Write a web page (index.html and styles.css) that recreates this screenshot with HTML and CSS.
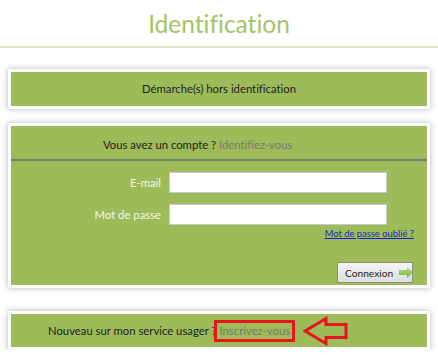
FILE: index.html
```html
<!DOCTYPE html>
<html lang="fr">
<head>
  <meta charset="UTF-8" />
  <meta name="viewport" content="width=device-width, initial-scale=1.0"/>
  <title>Identification</title>
  <link rel="stylesheet" href="styles.css">
</head>
<body>

  <div class="page-title">
    <h1>Identification</h1>
  </div>

  <div class="panel">
    <div class="panel-inner panel-simple">Démarche(s) hors identification</div>
  </div>

  <div class="panel panel-login">
    <div class="panel-inner">
      <div class="panel-head">Vous avez un compte ? <span class="muted">Identifiez-vous</span></div>
      <form class="login-form" onsubmit="return false">
        <div class="field">
          <label for="email">E-mail</label>
          <input type="text" id="email" name="email">
        </div>
        <div class="field">
          <label for="password">Mot de passe</label>
          <input type="password" id="password" name="password">
        </div>
        <div class="forgot">
          <a href="#">Mot de passe oublié ?</a>
        </div>
        <div class="actions">
          <button type="submit" class="btn-login">
            <span>Connexion</span>
            <svg class="btn-arrow" width="14" height="11" viewBox="0 0 14 11">
              <defs>
                <linearGradient id="arrowGrad" x1="0" y1="0" x2="0" y2="1">
                  <stop offset="0" stop-color="#b9e07f"/>
                  <stop offset="1" stop-color="#72b13c"/>
                </linearGradient>
              </defs>
              <polygon points="0,3 8,3 8,0 14,5.5 8,11 8,8 0,8" fill="url(#arrowGrad)"/>
            </svg>
          </button>
        </div>
      </form>
    </div>
  </div>

  <div class="panel panel-signup">
    <div class="panel-inner panel-register">
      <span>Nouveau sur mon service usager ?</span>
      <span class="highlight muted">Inscrivez-vous</span>
      <svg class="pointer" width="48" height="30" viewBox="0 0 48 30">
        <polygon points="2,15 23,2.5 23,8.5 43,8.5 43,21.5 23,21.5 23,27.5" fill="none" stroke="#e8141c" stroke-width="3" stroke-linejoin="miter"/>
      </svg>
    </div>
  </div>

</body>
</html>
```

FILE: styles.css
```css
body {
  margin: 0;
  padding: 0;
  font-family: Lato, "Open Sans", sans-serif;
  font-size: 11.3px;
  font-variant-ligatures: none;
  color: #222;
  background: #ffffff;
}

.page-title {
  border-bottom: 2px solid #d8e5bf;
  padding: 9px 0 7px;
  text-align: center;
}

.page-title h1 {
  margin: 0;
  font-size: 24.5px;
  line-height: 30px;
  font-weight: normal;
  color: #a3c466;
}

.panel {
  margin: 21px 8px 0;
  padding: 3px;
  background: #ffffff;
  box-shadow: 0 0 6px rgba(0, 0, 0, 0.3);
}

.panel-login {
  margin-top: 14px;
}

.panel-signup {
  margin-top: 23px;
}

.panel-inner {
  background-color: #9dbb59;
}

.panel-simple {
  height: 34px;
  line-height: 34px;
  text-align: center;
}

.panel-head {
  padding: 11px 0 6px 92px;
  line-height: 16px;
  border-bottom: 2px solid #7b7d6c;
}

.muted {
  color: #777a70;
}

.login-form {
  padding: 11px 13px 2px 0;
}

.field {
  display: flex;
  align-items: center;
  gap: 8px;
  margin-bottom: 11px;
}

.field label {
  width: 150px;
  text-align: right;
  color: #f3f6ea;
}

.field input {
  width: 218px;
  height: 21px;
  box-sizing: border-box;
  border: 1px solid #c9c9d2;
  background: #ffffff;
  margin: 0;
  padding: 2px 4px;
}

.forgot {
  margin-top: -9px;
  text-align: right;
  line-height: 12px;
}

.forgot a {
  font-size: 9.4px;
  color: #1e1ed0;
  text-decoration: underline;
}

.actions {
  display: flex;
  justify-content: flex-end;
  margin-top: 22px;
}

.btn-login {
  display: flex;
  align-items: center;
  width: 76px;
  height: 21px;
  box-sizing: border-box;
  margin-right: 1px;
  padding: 0 0 0 7px;
  border: 1px solid #8a8a84;
  border-radius: 0;
  background: linear-gradient(#f5f5f5, #dedede);
  font-family: Lato, "Open Sans", sans-serif;
  font-size: 10.2px;
  color: #222;
  cursor: pointer;
}

.btn-arrow {
  flex-shrink: 0;
  margin-left: 6px;
}

.panel-register {
  display: flex;
  align-items: center;
  height: 33px;
  padding-left: 37px;
}

.highlight {
  display: inline-block;
  margin-left: -2px;
  border: 3px solid #e8141c;
  padding: 0 2px;
  line-height: 16px;
}

.pointer {
  margin-left: 8px;
}
```
